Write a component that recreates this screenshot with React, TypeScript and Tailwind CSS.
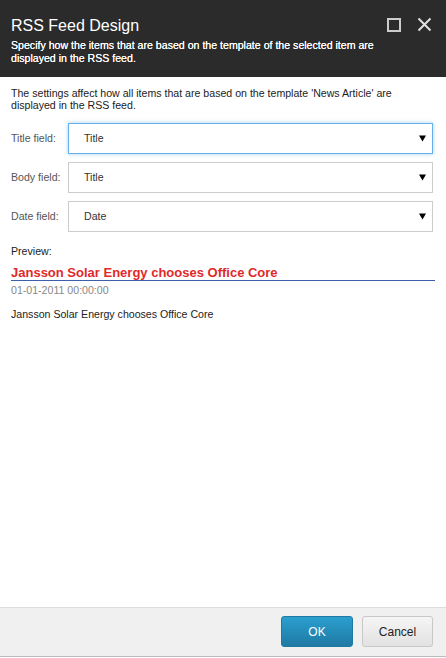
function Field({ label, value, focused }: { label: string; value: string; focused?: boolean }) {
  return (
    <div className="flex items-center">
      <label className="w-[57px] shrink-0 text-[10.6px] text-[#555]">{label}</label>
      <div
        className={
          'flex h-[31px] flex-1 items-center justify-between border bg-white pl-[15px] pr-[6px] text-[10.6px] text-[#333] ' +
          (focused ? 'border-[#66afe9] shadow-[0_0_4px_rgba(102,175,233,0.6)]' : 'border-[#ccc]')
        }
      >
        <span>{value}</span>
        <svg width="7" height="7" viewBox="0 0 7 7">
          <path d="M0 0.5 H7 L3.5 6.5 Z" fill="#000" />
        </svg>
      </div>
    </div>
  );
}

export default function App() {
  return (
    <div className="flex h-[658px] w-[446px] flex-col bg-white font-['Liberation_Sans',Arial,sans-serif]">
      <header className="flex h-[77px] shrink-0 flex-col bg-[#2b2b2b] px-[11px] pt-[16px] text-white">
        <div className="flex items-start justify-between">
          <h1 className="text-[16px] leading-[20px]">RSS Feed Design</h1>
          <div className="flex items-center gap-[16px] pr-[3px] pt-[1px]">
            <div className="h-[14px] w-[14px] border-[2px] border-[#ccc]" />
            <svg width="15" height="15" viewBox="0 0 15 15" className="text-[#e0e0e0]">
              <path d="M1.5 1.5 L13.5 13.5 M13.5 1.5 L1.5 13.5" stroke="currentColor" strokeWidth="2" />
            </svg>
          </div>
        </div>
        <p className="mt-[3px] pr-[30px] text-[10.6px] leading-[13px] [text-shadow:0_0_0.6px_#fff]">
          Specify how the items that are based on the template of the selected item are displayed in the RSS feed.
        </p>
      </header>

      <main className="flex-1 px-[11px] pt-[10px]">
        <p className="pr-[20px] text-[10.6px] leading-[12px] text-[#222]">
          The settings affect how all items that are based on the template 'News Article' are displayed in the RSS
          feed.
        </p>
        <div className="mt-[12px] flex flex-col gap-[8px] pr-[2px]">
          <Field label="Title field:" value="Title" focused />
          <Field label="Body field:" value="Title" />
          <Field label="Date field:" value="Date" />
        </div>

        <div className="mt-[12px] text-[10.6px] text-[#222]">Preview:</div>
        <h2 className="mt-[5px] border-b border-[#3b5fa8] text-[13px] font-bold leading-[15px] text-[#e02a2a]">
          Jansson Solar Energy chooses Office Core
        </h2>
        <div className="mt-[2px] text-[10.6px] text-[#888]">01-01-2011 00:00:00</div>
        <p className="mt-[8px] text-[10.6px] text-[#222]">Jansson Solar Energy chooses Office Core</p>
      </main>

      <footer className="flex h-[49px] shrink-0 items-start justify-end gap-[9px] border-t border-[#ddd] bg-[#f0f0f0] pr-[13px] pt-[8px]">
        <button className="h-[31px] w-[72px] rounded-[3px] border border-[#1e7aa3] bg-gradient-to-b from-[#2b9fcf] to-[#1e7aa3] text-[12px] text-white">
          OK
        </button>
        <button className="h-[31px] w-[71px] rounded-[3px] border border-[#c8c8c8] bg-gradient-to-b from-[#f5f5f5] to-[#e2e2e2] text-[12px] text-[#222]">
          Cancel
        </button>
      </footer>
      <div className="h-[2px] shrink-0 border-t border-[#bbb] bg-white" />
    </div>
  );
}
